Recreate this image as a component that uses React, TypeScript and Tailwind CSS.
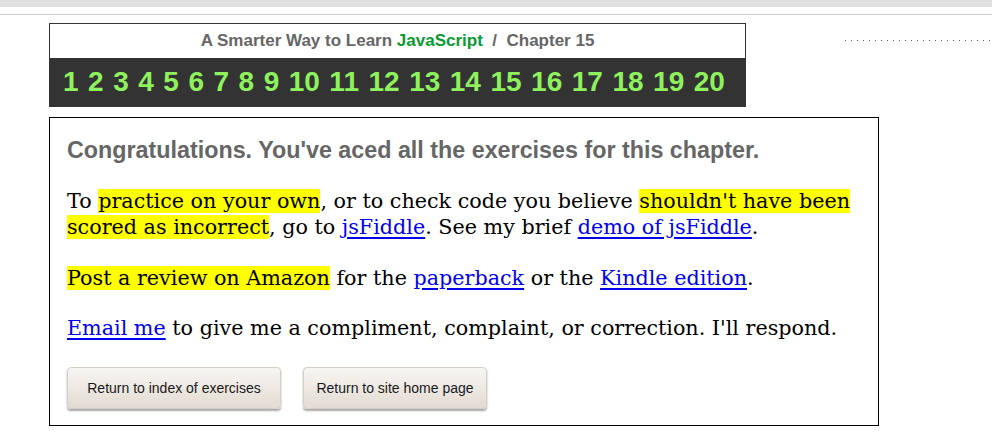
const chapters = Array.from({ length: 20 }, (_, i) => i + 1);

const sans = "font-['Liberation_Sans',Arial,sans-serif]";

function Mark({ children }: { children: React.ReactNode }) {
  return <span className="bg-[#ffff00]">{children}</span>;
}

function Link({ children }: { children: React.ReactNode }) {
  return (
    <a href="#" className="text-[#0000ee] underline underline-offset-[3px]">
      {children}
    </a>
  );
}

function Button({ label, width }: { label: string; width: string }) {
  return (
    <button
      className={`${width} ${sans} h-[42px] rounded-[4px] border border-[#d6cec6] bg-gradient-to-b from-[#f8f6f3] to-[#e3dbd2] text-[14px] text-[#1a1a1a] shadow-[0_2px_2px_rgba(0,0,0,0.35)]`}
    >
      {label}
    </button>
  );
}

export default function App() {
  return (
    <div className="min-h-[439px] bg-white">
      <div className="h-[7px] bg-[#e0e0e0]" />
      <div className="mt-[7px] h-px bg-[#cccccc]" />

      <div className="flex pl-[49px] pt-[8px]">
        <div className="w-[697px] border border-[#333333]">
          <div
            className={`${sans} h-[34px] bg-white pt-[7px] text-center text-[17px] font-bold leading-[20px] text-[#666666]`}
          >
            A Smarter Way to Learn{" "}
            <span className="text-[#0a9a32]">JavaScript</span>
            &nbsp; / &nbsp;Chapter 15
          </div>
          <div
            className={`${sans} flex h-[48px] items-center gap-[9.5px] bg-[#333333] pl-[13px] text-[28px] font-bold text-[#8ef15d]`}
          >
            {chapters.map((n) => (
              <a key={n} href="#">
                {n}
              </a>
            ))}
          </div>
        </div>
        <div className="ml-auto mt-[17px] h-px w-[147px] bg-[repeating-linear-gradient(90deg,#666_0_1px,transparent_1px_6px)]" />
      </div>

      <div className="ml-[49px] mt-[10px] w-[830px] border border-black px-[17px] pb-[16px] pt-[18px]">
        <h1 className={`${sans} text-[23.3px] font-bold leading-[28px] text-[#666666]`}>
          Congratulations. You've aced all the exercises for this chapter.
        </h1>

        <div className="font-['DejaVu_Serif',Georgia,serif] text-[20.7px] leading-[26px] text-black">
          <p className="mt-[24px]">
            To <Mark>practice on your own</Mark>, or to check code you believe{" "}
            <Mark>shouldn't have been scored as incorrect</Mark>, go to{" "}
            <Link>jsFiddle</Link>. See my brief <Link>demo of jsFiddle</Link>.
          </p>
          <p className="mt-[25px]">
            <Mark>Post a review on Amazon</Mark> for the <Link>paperback</Link>{" "}
            or the <Link>Kindle edition</Link>.
          </p>
          <p className="mt-[24px]">
            <Link>Email me</Link> to give me a compliment, complaint, or
            correction. I'll respond.
          </p>
        </div>

        <div className="mt-[26px] flex gap-[22px]">
          <Button label="Return to index of exercises" width="w-[214px]" />
          <Button label="Return to site home page" width="w-[184px]" />
        </div>
      </div>
    </div>
  );
}
